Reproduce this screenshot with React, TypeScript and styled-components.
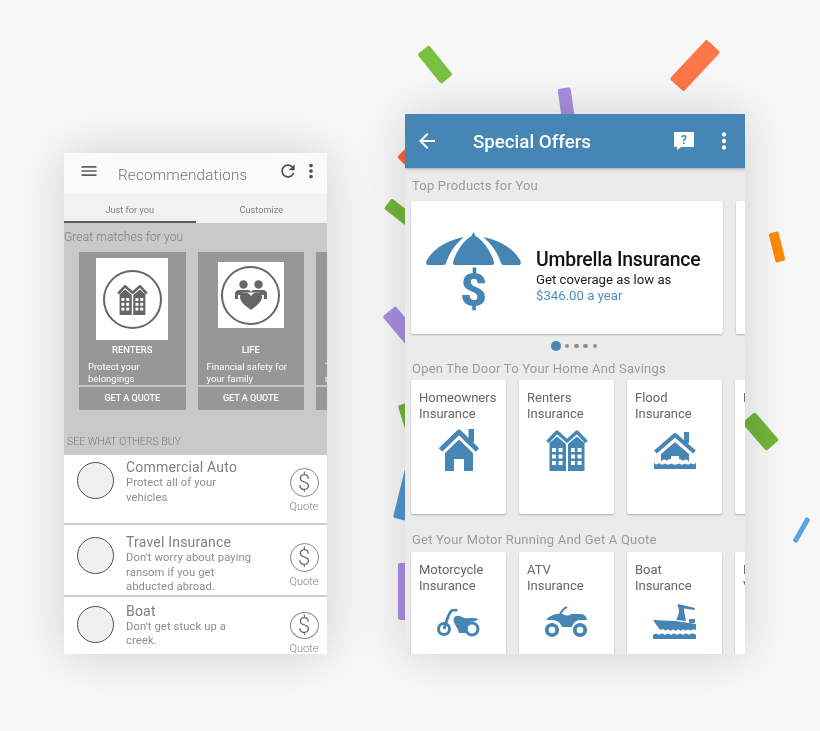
import React, { FC } from 'react';
import styled, { createGlobalStyle } from 'styled-components';

const GlobalStyle = createGlobalStyle`
  html, body {
    margin: 0;
    padding: 0;
    background: #f8f8f8;
  }
  * {
    box-sizing: border-box;
  }
`;

const BLUE = '#4586b4';
const GRAY = '#666666';

const Stage = styled.div`
  position: relative;
  width: 820px;
  height: 731px;
  overflow: hidden;
  display: flex;
  align-items: flex-end;
  gap: 78px;
  padding: 0 75px 77px 64px;
  background: #f8f8f8;
  font-family: Roboto, 'Liberation Sans', sans-serif;
`;

const Piece = styled.div<{ $x: number; $y: number; $w: number; $h: number; $r: number; $c: string }>`
  position: absolute;
  left: ${(p) => p.$x - p.$w / 2}px;
  top: ${(p) => p.$y - p.$h / 2}px;
  width: ${(p) => p.$w}px;
  height: ${(p) => p.$h}px;
  background: ${(p) => p.$c};
  border-radius: 2px;
  transform: rotate(${(p) => p.$r}deg);
`;

const Phone = styled.div<{ $w: number; $h: number; $bg: string; $blur: number }>`
  position: relative;
  z-index: 1;
  flex: none;
  width: ${(p) => p.$w}px;
  height: ${(p) => p.$h}px;
  overflow: hidden;
  background: ${(p) => p.$bg};
  filter: blur(${(p) => p.$blur}px);
`;

const PhoneShadow = styled.div`
  flex: none;
  box-shadow: 0 0 48px rgba(0, 0, 0, 0.17);
  z-index: 1;
`;

/* left phone */
const TopBar = styled.div`
  height: 41px;
  display: flex;
  align-items: center;
  gap: 2px;
  padding: 0 5px 6px 15px;
  background: #fafafa;
`;

const TopTitle = styled.div`
  flex: 1;
  margin: 9px 0 0 17px;
  font-size: 15.2px;
  letter-spacing: 0.2px;
  font-weight: 300;
  color: #767676;
`;

const Tabs = styled.div`
  height: 29px;
  display: flex;
  background: #f2f2f2;
`;

const Tab = styled.div<{ $active?: boolean }>`
  flex: 1;
  display: flex;
  align-items: center;
  justify-content: center;
  padding-top: 3px;
  font-size: 9.2px;
  color: #828282;
  border-bottom: 2px solid ${(p) => (p.$active ? '#5b5b5b' : 'transparent')};
`;

const Matches = styled.div`
  height: 232px;
  background: #c9c9c9;
  overflow: hidden;
`;

const MatchesTitle = styled.div`
  height: 29px;
  padding-top: 7px;
  font-size: 12px;
  font-weight: 300;
  letter-spacing: 0.1px;
  color: #7e7e7e;
`;

const Rail = styled.div`
  display: flex;
  gap: 12px;
  padding-left: 15px;
`;

const OfferCard = styled.div`
  flex: none;
  width: 106.5px;
  height: 158px;
  display: flex;
  flex-direction: column;
  background: #979797;
  color: #fff;
`;

const OfferTop = styled.div<{ $top: number }>`
  height: 88px;
  display: flex;
  align-items: flex-start;
  justify-content: center;
  padding-top: ${(p) => p.$top}px;
`;

const OfferImage = styled.div<{ $w: number; $h: number }>`
  width: ${(p) => p.$w}px;
  height: ${(p) => p.$h}px;
  display: flex;
  align-items: center;
  justify-content: center;
  background: #fff;
`;

const IconRing = styled.div`
  width: 59px;
  height: 59px;
  border-radius: 50%;
  border: 2px solid ${GRAY};
  display: flex;
  align-items: center;
  justify-content: center;
  color: ${GRAY};
`;

const OfferName = styled.div`
  margin-top: 5px;
  text-align: center;
  font-size: 9.4px;
  font-weight: 500;
  line-height: 10px;
`;

const OfferText = styled.div`
  height: 24px;
  margin-top: 6px;
  padding-left: 9px;
  font-size: 9.5px;
  line-height: 12px;
  overflow: hidden;
`;

const OfferAction = styled.div`
  flex: 1;
  display: flex;
  align-items: center;
  justify-content: center;
  padding-bottom: 2px;
  border-top: 2px solid #c4c4c4;
  font-size: 9px;
  font-weight: 500;
`;

const OthersTitle = styled.div`
  margin: 25px 0 0 3px;
  font-size: 10.5px;
  font-weight: 300;
  color: #7c7c7c;
`;

const Row = styled.div<{ $h: number; $line?: boolean; $top: number }>`
  height: ${(p) => p.$h}px;
  display: flex;
  padding-top: ${(p) => p.$top}px;
  background: #fff;
  border-bottom: ${(p) => (p.$line ? '2px solid #cdcdcd' : 'none')};
`;

const Avatar = styled.div`
  flex: none;
  width: 37px;
  height: 37px;
  margin: 7px 12.5px 0 12.5px;
  border-radius: 50%;
  background: #f0f0f0;
  border: 1.5px solid #4f4f4f;
`;

const RowBody = styled.div`
  flex: 1;
  padding-top: 5px;
`;

const RowTitle = styled.div`
  font-size: 14px;
  line-height: 14px;
  letter-spacing: 0.2px;
  color: #808080;
`;

const RowText = styled.div`
  width: 128px;
  margin-top: 2px;
  font-size: 11.2px;
  line-height: 14.7px;
  letter-spacing: 0.12px;
  color: #8c8c8c;
`;

const QuoteBox = styled.div`
  flex: none;
  width: 46px;
  display: flex;
  flex-direction: column;
  align-items: center;
  padding-top: 13px;
  font-size: 11px;
  font-weight: 300;
  color: #7e7e7e;
`;

const DollarRing = styled.div`
  width: 29px;
  height: 29px;
  margin-bottom: 3px;
  border-radius: 50%;
  border: 1.5px solid #888;
  display: flex;
  align-items: center;
  justify-content: center;
  font-size: 22px;
  font-weight: 300;
  color: #666;
`;

/* right phone */
const AppBar = styled.div`
  position: relative;
  height: 54px;
  display: flex;
  align-items: center;
  padding: 0 8px 0 10px;
  background: ${BLUE};
  box-shadow: 0 1px 3px rgba(0, 0, 0, 0.3);
  color: #fff;
`;

const AppTitle = styled.div`
  flex: 1;
  margin: 2px 0 0 34px;
  font-size: 18.7px;
  font-weight: 500;
`;

const HelpIcon = styled.svg`
  margin-right: 17px;
`;

const SectionTitle = styled.div<{ $top: number }>`
  margin: ${(p) => p.$top}px 0 0 7px;
  height: 15px;
  font-size: 13px;
  line-height: 15px;
  letter-spacing: 0.2px;
  color: #9b9b9b;
`;

const CardRail = styled.div<{ $top: number }>`
  display: flex;
  gap: 13px;
  margin-top: ${(p) => p.$top}px;
  padding-left: 6px;
`;

const Hero = styled.div`
  flex: none;
  width: 312px;
  height: 133px;
  display: flex;
  align-items: center;
  padding-top: 2px;
  background: #fff;
  border-radius: 2px;
  box-shadow: 0 1px 2px rgba(0, 0, 0, 0.25);
`;

const HeroIcon = styled.div`
  width: 125px;
  margin-top: 6px;
  display: flex;
  flex-direction: column;
  align-items: center;
  color: ${BLUE};
`;

const HeroDollar = styled.div`
  margin-top: 4px;
  font-size: 46px;
  line-height: 42px;
  font-weight: 900;
`;

const HeroTitle = styled.div`
  margin-top: 14px;
  font-size: 19.4px;
  line-height: 24px;
  font-weight: 500;
  letter-spacing: -0.2px;
  color: #111;
`;

const HeroLine = styled.div<{ $blue?: boolean }>`
  font-size: 13.2px;
  line-height: 15.5px;
  color: ${(p) => (p.$blue ? '#4b8fc2' : '#222')};
`;

const Dots = styled.div`
  height: 24px;
  display: flex;
  align-items: center;
  gap: 4.8px;
  padding-left: 146px;
`;

const Dot = styled.div<{ $on?: boolean }>`
  width: ${(p) => (p.$on ? 10 : 4.5)}px;
  height: ${(p) => (p.$on ? 10 : 4.5)}px;
  margin-right: ${(p) => (p.$on ? -1 : 0)}px;
  border-radius: 50%;
  background: ${(p) => (p.$on ? BLUE : '#8f8f8f')};
`;

const Tile = styled.div`
  flex: none;
  width: 95px;
  height: 134px;
  display: flex;
  flex-direction: column;
  padding: 10px 0 0 8px;
  background: #fff;
  border-radius: 2px;
  box-shadow: 0 1px 2px rgba(0, 0, 0, 0.25);
`;

const TileTitle = styled.div`
  height: 32px;
  font-size: 13px;
  line-height: 16px;
  white-space: pre;
  color: #666;
`;

const TileIcon = styled.div<{ $top: number }>`
  display: flex;
  justify-content: center;
  margin: ${(p) => p.$top}px 0 0 -8px;
  color: ${BLUE};
`;

const MenuIcon: FC<{ d: string; size: number; color: string }> = ({ d, size, color }) => (
  <svg width={size} height={size} viewBox="0 0 24 24" fill={color}>
    <path d={d} />
  </svg>
);

const ICON_MENU = 'M3 18h18v-2H3v2zm0-5h18v-2H3v2zm0-7v2h18V6H3z';
const ICON_REFRESH = 'M17.65 6.35C16.2 4.9 14.21 4 12 4c-4.42 0-7.99 3.58-7.99 8s3.57 8 7.99 8c3.73 0 6.84-2.55 7.73-6h-2.08c-.82 2.33-3.04 4-5.65 4-3.31 0-6-2.69-6-6s2.69-6 6-6c1.66 0 3.14.69 4.22 1.78L13 11h7V4l-2.35 2.35z';
const ICON_MORE = 'M12 8c1.1 0 2-.9 2-2s-.9-2-2-2-2 .9-2 2 .9 2 2 2zm0 2c-1.1 0-2 .9-2 2s.9 2 2 2 2-.9 2-2-.9-2-2-2zm0 6c-1.1 0-2 .9-2 2s.9 2 2 2 2-.9 2-2-.9-2-2-2z';
const ICON_BACK = 'M20 11H7.83l5.59-5.59L12 4l-8 8 8 8 1.41-1.41L7.83 13H20v-2z';

const HouseIcon: FC = () => (
  <svg width="40" height="42" viewBox="0 0 40 42" fill="currentColor">
    <rect x="29.5" y="0" width="5.5" height="13" />
    <path d="M1.5 21 L20 3 L38.5 21" fill="none" stroke="currentColor" strokeWidth="4.8" strokeLinejoin="round" />
    <path d="M20 10.5 L34 24 V42 H25 V30 H15 V42 H6 V24 Z" />
  </svg>
);

const RentersIcon: FC<{ size?: number }> = ({ size = 42 }) => {
  const windows = [6, 25].flatMap((x) => [19, 25.5, 32].flatMap((y) => [x, x + 6.5].map((wx) => [wx, y])));
  return (
    <svg width={size} height={size} viewBox="0 0 42 42" fill="currentColor">
      <path d="M1.5 13 L11 3 L21 12 L31 3 L40.5 13" fill="none" stroke="currentColor" strokeWidth="3.4" strokeLinejoin="round" />
      <path d="M3.5 14 L11 7.5 L20 15 V42 H3.5 Z" />
      <path d="M22 15 L31 7.5 L38.5 14 V42 H22 Z" />
      {windows.map(([x, y]) => (
        <rect key={`${x}-${y}`} x={x} y={y} width="4" height="4" fill="#fff" />
      ))}
    </svg>
  );
};

const FloodIcon: FC = () => (
  <svg width="42" height="37" viewBox="0 0 42 37" fill="currentColor">
    <rect x="30" y="0" width="5" height="11" />
    <path d="M1.5 20 L21 3 L40.5 20" fill="none" stroke="currentColor" strokeWidth="4.2" strokeLinejoin="round" />
    <path d="M21 10 L35 22 V30 C33 27 31 27 29 29 C27 27 25 27 25 27 V24 H17 V27 C16 27 14 27 13 29 C11 27 9 27 7 30 V22 Z" />
    <path d="M0 33 V30 C1 33 3 33 5 31 C7 33 9 33 11 31.5 C13 33 15 33 17 31.5 C19 33 23 33 25 31.5 C27 33 29 33 31 31.5 C33 33 35 33 37 31 C39 33 41 33 42 30 V37 H0 Z" />
  </svg>
);

const MotoIcon: FC = () => (
  <svg width="43" height="28" viewBox="0 0 43 28" fill="currentColor">
    <circle cx="7" cy="20" r="5.5" fill="none" stroke="currentColor" strokeWidth="3" />
    <circle cx="35" cy="20" r="6" fill="none" stroke="currentColor" strokeWidth="3" />
    <path d="M7 20 C10 12 11 4 15 1.5 C17 0.5 19 1 20 2" fill="none" stroke="currentColor" strokeWidth="2.8" />
    <path d="M17 9 C19 5 24 7 27 9 C31 10 36 8 41 10 C41 12 36 12 33 13 C30 15 29 19 32 24 H22 C21 18 15 14 17 9 Z" />
  </svg>
);

const AtvIcon: FC = () => (
  <svg width="43" height="32" viewBox="0 0 43 32" fill="currentColor">
    <path d="M15 8 C17 6 18 2 22 1" fill="none" stroke="currentColor" strokeWidth="2" />
    <path d="M4 11 C8 8 14 7 18 8 C21 10 24 10 26 8 H36 C39 8 42 11 42 14 H36 C31 14 28 17 27 21 H17 C16 17 12 14 7 14 H1 Z" />
    <circle cx="7" cy="24" r="5.2" fill="none" stroke="currentColor" strokeWidth="3.8" />
    <circle cx="35" cy="24" r="5.2" fill="none" stroke="currentColor" strokeWidth="3.8" />
  </svg>
);

const BoatIcon: FC = () => (
  <svg width="43" height="35" viewBox="0 0 43 35" fill="currentColor">
    <path d="M25 0 L42 4 L41.5 6 L31 4.5 C31 8 32 11 33 17 L23 16 C26 11 27 6 24.5 2 Z" />
    <rect x="36" y="15" width="6" height="4" rx="1" />
    <path d="M0 16 L22 17 L43 20 V26 C41 25 39 25 38 27 C36 25 34 25 33 27 C31 25 29 25 28 27 C26 25 24 25 23 27 C21 25 19 25 18 27 C16 25 14 25 13 27 C11 25 9 25 7 26 Z" />
    <path d="M0 33 V31 C2 29 4 29 6 31 C8 29 10 29 12 31 C14 29 16 29 18 31 C20 29 22 29 24 31 C26 29 28 29 30 31 C32 29 34 29 36 31 C38 29 41 29 43 31 V35 H0 Z" />
  </svg>
);

const LifeIcon: FC = () => (
  <svg width="32" height="30" viewBox="0 0 32 30" fill="currentColor">
    <circle cx="8.5" cy="4.5" r="4.2" />
    <circle cx="23.5" cy="4.5" r="4.2" />
    <path d="M0 19 V14 C0 11 2 10 4 10 H13 C14.5 10 15.5 11 16 12 C16.5 11 17.5 10 19 10 H28 C30 10 32 11 32 14 V19 H29 V15 H26 L24 12.5 H8 L6 15 H3 V19 Z" />
    <path d="M16 30 C11 26 5 22 5 17 C5 13.5 8 12 11 12.5 C13 13 15 14 16 16 C17 14 19 13 21 12.5 C24 12 27 13.5 27 17 C27 22 21 26 16 30 Z" />
  </svg>
);

const UmbrellaIcon: FC = () => (
  <svg width="95" height="33" viewBox="0 0 95 33" fill="currentColor">
    <path d="M1.5 33 Q-1 31.5 1 28 C8 16 22 8 38 5 C29 12 23 22 20 31 Q19.5 33 18 33 Z" />
    <path d="M93.5 33 Q96 31.5 94 28 C87 16 73 8 57 5 C66 12 72 22 75 31 Q75.5 33 77 33 Z" />
    <path d="M47.5 0 L49.5 4 C58 9 65 20 68 30 Q68.5 33 66 33 H29 Q26.5 33 27 30 C30 20 37 9 45.5 4 Z" />
  </svg>
);

const OFFERS = [
  { name: 'RENTERS', text: 'Protect your belongings', w: 72, h: 82, top: 6, icon: <RentersIcon size={31} /> },
  { name: 'LIFE', text: 'Financial safety for your family', w: 66, h: 66, top: 10, icon: <LifeIcon /> },
  { name: 'AUTO', text: 'Travel with peace of mind', w: 66, h: 66, top: 10, icon: <LifeIcon /> },
];

const OTHERS = [
  { title: 'Commercial Auto', text: 'Protect all of your vehicles', h: 70, top: 0, line: true },
  { title: 'Travel Insurance', text: "Don't worry about paying ransom if you get abducted abroad.", h: 72, top: 5, line: true },
  { title: 'Boat', text: "Don't get stuck up a creek.", h: 57, top: 1.5, line: false },
];

const HOME_TILES = [
  { title: 'Homeowners\nInsurance', icon: <HouseIcon />, top: 7 },
  { title: 'Renters\nInsurance', icon: <RentersIcon />, top: 7 },
  { title: 'Flood\nInsurance', icon: <FloodIcon />, top: 10 },
  { title: 'New', icon: null, top: 0 },
];

const MOTOR_TILES = [
  { title: 'Motorcycle\nInsurance', icon: <MotoIcon />, top: 15 },
  { title: 'ATV\nInsurance', icon: <AtvIcon />, top: 12 },
  { title: 'Boat\nInsurance', icon: <BoatIcon />, top: 10 },
  { title: 'Recreational\nVehicle', icon: null, top: 0 },
];

const CONFETTI = [
  { x: 435, y: 64, w: 38, h: 15, r: 51, c: '#7ac143' },
  { x: 695, y: 65, w: 54, h: 19, r: -47, c: '#ff7649' },
  { x: 566, y: 106, w: 13, h: 36, r: -8, c: '#a98ee0' },
  { x: 407, y: 157, w: 14, h: 14, r: 45, c: '#f0663a' },
  { x: 402, y: 214, w: 36, h: 13, r: 38, c: '#72b53a' },
  { x: 405, y: 330, w: 50, h: 17, r: 50, c: '#a98ee0' },
  { x: 408, y: 415, w: 14, h: 24, r: -17, c: '#72b53a' },
  { x: 406, y: 490, w: 13, h: 60, r: 14, c: '#4f97d3' },
  { x: 404, y: 591, w: 13, h: 57, r: 0, c: '#a98ee0' },
  { x: 777, y: 247, w: 10, h: 30, r: -14, c: '#ff8a00' },
  { x: 760, y: 431, w: 37, h: 17, r: 49, c: '#72b53a' },
  { x: 801, y: 530, w: 5, h: 28, r: 30, c: '#5aa2e0' },
];

const App: FC = () => (
  <Stage>
    <GlobalStyle />
    {CONFETTI.map((c) => (
      <Piece key={`${c.x}-${c.y}`} $x={c.x} $y={c.y} $w={c.w} $h={c.h} $r={c.r} $c={c.c} />
    ))}

    <PhoneShadow>
      <Phone $w={263} $h={501} $bg="#fff" $blur={0.5}>
        <TopBar>
          <MenuIcon d={ICON_MENU} size={20} color="#5f5f5f" />
          <TopTitle>Recommendations</TopTitle>
          <MenuIcon d={ICON_REFRESH} size={20} color="#4f4f4f" />
          <MenuIcon d={ICON_MORE} size={22} color="#4f4f4f" />
        </TopBar>
        <Tabs>
          <Tab $active>Just for you</Tab>
          <Tab>Customize</Tab>
        </Tabs>
        <Matches>
          <MatchesTitle>Great matches for you</MatchesTitle>
          <Rail>
            {OFFERS.map((o) => (
              <OfferCard key={o.name}>
                <OfferTop $top={o.top}>
                  <OfferImage $w={o.w} $h={o.h}>
                    <IconRing>{o.icon}</IconRing>
                  </OfferImage>
                </OfferTop>
                <OfferName>{o.name}</OfferName>
                <OfferText>{o.text}</OfferText>
                <OfferAction>GET A QUOTE</OfferAction>
              </OfferCard>
            ))}
          </Rail>
          <OthersTitle>SEE WHAT OTHERS BUY</OthersTitle>
        </Matches>
        {OTHERS.map((r) => (
          <Row key={r.title} $h={r.h} $line={r.line} $top={r.top}>
            <Avatar />
            <RowBody>
              <RowTitle>{r.title}</RowTitle>
              <RowText>{r.text}</RowText>
            </RowBody>
            <QuoteBox>
              <DollarRing>$</DollarRing>
              Quote
            </QuoteBox>
          </Row>
        ))}
      </Phone>
    </PhoneShadow>

    <PhoneShadow>
      <Phone $w={340} $h={540} $bg="#ebebeb" $blur={0.35}>
        <AppBar>
          <MenuIcon d={ICON_BACK} size={24} color="#fff" />
          <AppTitle>Special Offers</AppTitle>
          <HelpIcon width="20" height="18" viewBox="0 0 20 18">
            <path d="M0 0 H20 V14 C20 15 19 15 18 15 H7 L3 18 V15 H1 C0 15 0 14.5 0 14 Z" fill="#fff" />
            <text x="10" y="12" textAnchor="middle" fontFamily="Roboto, sans-serif" fontWeight="700" fontSize="12" fill={BLUE}>?</text>
          </HelpIcon>
          <MenuIcon d={ICON_MORE} size={26} color="#fff" />
        </AppBar>

        <SectionTitle $top={10}>Top Products for You</SectionTitle>
        <CardRail $top={8}>
          <Hero>
            <HeroIcon>
              <UmbrellaIcon />
              <HeroDollar>$</HeroDollar>
            </HeroIcon>
            <div>
              <HeroTitle>Umbrella Insurance</HeroTitle>
              <HeroLine>Get coverage as low as</HeroLine>
              <HeroLine $blue>$346.00 a year</HeroLine>
            </div>
          </Hero>
          <Hero />
        </CardRail>
        <Dots>
          <Dot $on />
          <Dot />
          <Dot />
          <Dot />
          <Dot />
        </Dots>

        <SectionTitle $top={3}>Open The Door To Your Home And Savings</SectionTitle>
        <CardRail $top={4}>
          {HOME_TILES.map((t) => (
            <Tile key={t.title}>
              <TileTitle>{t.title}</TileTitle>
              <TileIcon $top={t.top}>{t.icon}</TileIcon>
            </Tile>
          ))}
        </CardRail>

        <SectionTitle $top={18}>Get Your Motor Running And Get A Quote</SectionTitle>
        <CardRail $top={5}>
          {MOTOR_TILES.map((t) => (
            <Tile key={t.title}>
              <TileTitle>{t.title}</TileTitle>
              <TileIcon $top={t.top}>{t.icon}</TileIcon>
            </Tile>
          ))}
        </CardRail>
      </Phone>
    </PhoneShadow>
  </Stage>
);

export default App;
